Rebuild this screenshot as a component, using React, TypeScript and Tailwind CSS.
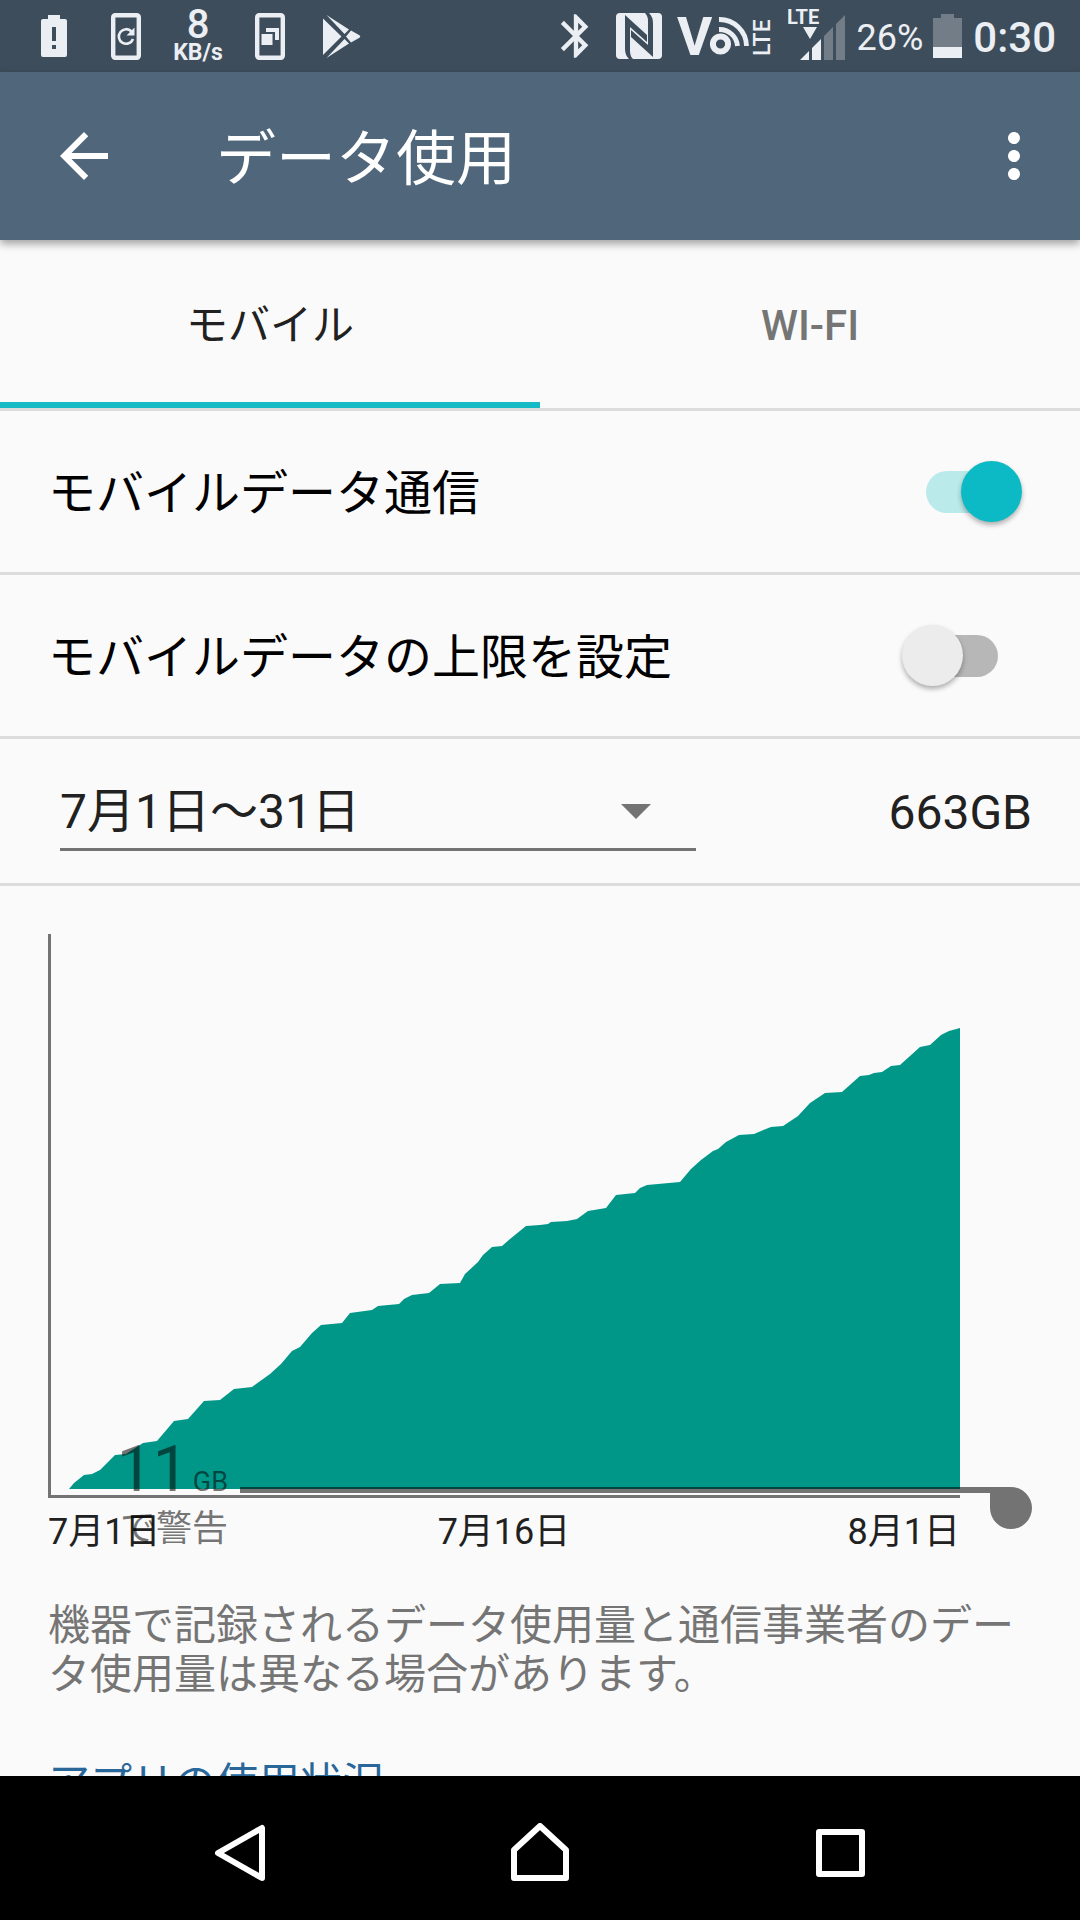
import { useState } from "react"
import { MdArrowBack, MdBluetooth, MdMoreVert } from "react-icons/md"

const usage: [number, number][] = [
    [21, 555], [26, 549], [36, 541], [44, 540], [52, 536], [67, 521], [78, 520], [95, 509], [109, 507],
    [126, 487], [140, 485], [156, 467], [172, 466], [186, 455], [204, 453], [222, 440], [233, 430],
    [244, 417], [252, 413], [264, 399], [273, 391], [294, 389], [302, 379], [324, 376], [330, 372],
    [351, 370], [356, 365], [364, 361], [381, 359], [392, 350], [412, 349], [417, 340], [430, 328],
    [435, 321], [444, 313], [454, 312], [462, 305], [478, 292], [492, 291], [500, 290], [503, 288],
    [519, 287], [529, 285], [540, 277], [558, 274], [568, 261], [587, 259], [592, 254], [599, 251],
    [632, 248], [643, 235], [653, 226], [665, 217], [670, 215], [678, 208], [691, 201], [706, 200],
    [713, 197], [723, 193], [735, 192], [750, 182], [762, 169], [777, 159], [794, 158], [812, 142],
    [821, 141], [826, 139], [834, 138], [843, 132], [852, 131], [872, 113], [882, 111], [893, 101],
    [901, 97], [912, 94],
]

const area = `M${usage.map(([x, y]) => `${x} ${y}`).join("L")}V555H21Z`

function StatusBar() {
    return (
        <div className="flex h-[72px] shrink-0 items-center justify-between bg-[#3e4d5b] pl-[18px] pr-6 text-[#ebeff3]">
            <div className="flex h-full items-center">
                <div className="flex w-[72px] justify-center">
                    <svg width="26" height="42" viewBox="0 0 26 42" fill="currentColor">
                        <path fillRule="evenodd" d="M7 0h12v4h5a2 2 0 0 1 2 2v34a2 2 0 0 1-2 2H2a2 2 0 0 1-2-2V6a2 2 0 0 1 2-2h5zM11 12v14h4V12zM11 30v4h4v-4z" />
                    </svg>
                </div>
                <div className="flex w-[72px] justify-center">
                    <svg width="30" height="47" viewBox="0 0 30 47" fill="none" stroke="currentColor">
                        <rect x="2.2" y="2.2" width="25.6" height="42.6" rx="2" strokeWidth="4.4" />
                        <path d="M20.5 18.5A7.3 7.3 0 1 0 22 26" strokeWidth="2.6" />
                        <path d="M23.5 14.5v8h-8z" fill="currentColor" stroke="none" />
                    </svg>
                </div>
                <div className="flex w-[72px] flex-col items-center pt-1">
                    <span className="text-[40px] leading-[30px] font-medium">8</span>
                    <span className="text-[23px] leading-[26px] font-bold">KB/s</span>
                </div>
                <div className="flex w-[72px] justify-center">
                    <svg width="30" height="47" viewBox="0 0 30 47">
                        <rect x="2.2" y="2.2" width="25.6" height="42.6" rx="2" fill="none" stroke="currentColor" strokeWidth="4.4" />
                        <path d="M11 15h13v12h-4v-8h-9zM6.500 21h11v11h-11z" fill="currentColor" />
                    </svg>
                </div>
                <div className="flex w-[72px] justify-center">
                    <svg width="38" height="43" viewBox="0 0 38 43" fill="currentColor">
                        <path d="M0 3.500 18.500 21.500 0 40zM3.500 0 26 14.500 21.500 19zM3.500 43 26 28.500 21.500 24zM28 15.500l8 4.500q2.500 1.500 0 3l-8 4.500-5-6z" />
                    </svg>
                </div>
            </div>
            <div className="flex h-full items-center gap-[10px]">
                <MdBluetooth size={52} />
                <svg width="54" height="46" viewBox="-4 0 54 46">
                    <rect width="46" height="46" rx="4" fill="currentColor" />
                    <g fill="#3e4d5b">
                        <path d="M9 2 31 22v7L14 14v24q0 5 3 8h-4q-4-4-4-10z" />
                        <path d="M37 44 15 24v-7l17 15V8q0-5-3-8h4q4 4 4 10z" />
                    </g>
                </svg>
                <svg width="102" height="60" viewBox="675 6 102 60" fill="currentColor">
                    <text x="676" y="55" fontSize="54" fontWeight="700">V</text>
                    <g fill="none" stroke="currentColor">
                        <circle cx="719.5" cy="44" r="7.600" strokeWidth="6" />
                        <path d="M718 19.500A27 27 0 0 1 745.500 46M718 29.500A18 18 0 0 1 736.500 46" strokeWidth="4.800" />
                    </g>
                    <text transform="translate(769 56) rotate(-90)" fontSize="23" fontWeight="500">LTE</text>
                </svg>
                <svg width="58" height="60" viewBox="788 6 58 60" fill="currentColor">
                    <text x="787" y="24" fontSize="20" fontWeight="700">LTE</text>
                    <path d="M803 27h14l-7 12zM800 60l9-9v9zM812 48l9-9v21h-9z" />
                    <path d="M824 36l9-9v33h-9zM836 24l9-9v45h-9z" opacity=".3" />
                </svg>
                <span className="pt-1 text-[36px] leading-none">26%</span>
                <svg width="30" height="44" viewBox="0 0 30 44" fill="currentColor">
                    <path d="M8 0h13v4h8v29H0V4h8z" opacity=".3" />
                    <path d="M0 33h29v11H0z" />
                </svg>
                <span className="pt-1 text-[42px] leading-none font-medium">0:30</span>
            </div>
        </div>
    )
}

type SwitchProps = {
    label: string
    checked: boolean
    onChange: (checked: boolean) => void
}

function Switch({ label, checked, onChange }: SwitchProps) {
    return (
        <label className={`flex h-[164px] items-center justify-between border-b-[3px] border-[#dcdcdc] pl-12 text-5xl text-black ${checked ? "pr-[58px]" : "pr-[82px]"}`}>
            <span className="pt-1">{label}</span>
            <span className="grid h-[62px] w-24 items-center">
                <input
                    type="checkbox"
                    role="switch"
                    checked={checked}
                    onChange={(e) => onChange(e.target.checked)}
                    className="peer col-start-1 row-start-1 h-[42px] w-[84px] appearance-none justify-self-end rounded-full bg-[#b7b7b7] checked:justify-self-start checked:bg-[#baeaea]"
                />
                <span className="pointer-events-none col-start-1 row-start-1 size-[61px] justify-self-start rounded-full bg-[#ececec] shadow-[0_3px_5px_rgba(0,0,0,0.3)] peer-checked:justify-self-end peer-checked:bg-[#0bbac4]" />
            </span>
        </label>
    )
}

function UsageChart() {
    return (
        <section className="px-12 pt-12">
            <div className="relative">
                <svg viewBox="0 0 984 564" className="block w-full overflow-visible">
                    <path d={area} fill="#009688" />
                    <path d="M0 0h3v561h909v3H0z" fill="#737373" />
                    {/* warning threshold and its drag handle */}
                    <path d="M192 553h771a21 21 0 1 1-21 21v-15H192z" fill="#000" fillOpacity=".54" />
                </svg>
                <div className="absolute top-[504px] left-[72px] flex w-[108px] flex-col items-end text-black/54">
                    <p className="flex items-baseline gap-1 leading-[64px]">
                        <span className="text-[64px]">11</span>
                        <span className="text-[27px]">GB</span>
                    </p>
                    <p className="text-4xl leading-[30px]">で警告</p>
                </div>
            </div>
            <div className="mr-[72px] flex justify-between pt-[10px] text-4xl leading-[48px]">
                <span>7月1日</span>
                <span>7月16日</span>
                <span>8月1日</span>
            </div>
        </section>
    )
}

export default function App() {
    const [mobileData, setMobileData] = useState(true)
    const [limit, setLimit] = useState(false)

    return (
        <div lang="ja" className="flex h-screen flex-col bg-[#fafafa] font-[Roboto,'Noto_Sans_CJK_JP',sans-serif] text-[#212121]">
            <StatusBar />

            <header className="z-10 flex h-[168px] shrink-0 items-center bg-[#50667a] px-[30px] text-white shadow-[0_4px_8px_rgba(0,0,0,0.35)]">
                <button aria-label="戻る" className="mx-[18px]">
                    <MdArrowBack size={72} />
                </button>
                <h1 className="ml-[78px] flex-1 pt-2 text-6xl font-normal">データ使用</h1>
                <button aria-label="その他">
                    <MdMoreVert size={72} />
                </button>
            </header>

            <main className="min-h-0 flex-1 overflow-hidden">
                <div role="tablist" className="grid h-[171px] grid-cols-2 border-b-[3px] border-[#dcdcdc] text-[42px]">
                    <button role="tab" aria-selected="true" className="border-b-[6px] border-[#16bac5] pt-2">モバイル</button>
                    <button role="tab" aria-selected="false" className="border-b-[6px] border-transparent pt-2 font-medium text-[#757575]">WI-FI</button>
                </div>

                <Switch label="モバイルデータ通信" checked={mobileData} onChange={setMobileData} />
                <Switch label="モバイルデータの上限を設定" checked={limit} onChange={setLimit} />

                <div className="flex h-[147px] items-center justify-between border-b-[3px] border-[#dcdcdc] pr-12 pl-[60px] text-5xl">
                    <div className="grid w-[636px] items-center border-b-[3px] border-[#737373]">
                        <select aria-label="期間" className="col-start-1 row-start-1 h-[76px] w-full appearance-none bg-transparent pt-1">
                            <option>7月1日～31日</option>
                        </select>
                        <svg width="30" height="15" viewBox="0 0 30 15" className="pointer-events-none col-start-1 row-start-1 mt-1 mr-[45px] justify-self-end">
                            <path d="M0 0h30L15 15z" fill="#737373" />
                        </svg>
                    </div>
                    <span className="pt-1">663GB</span>
                </div>

                <UsageChart />

                <p className="px-12 pt-[45px] text-[42px] leading-[49px] text-[#757575]">
                    機器で記録されるデータ使用量と通信事業者のデータ使用量は異なる場合があります。
                </p>
                <h2 className="px-12 pt-[60px] text-[42px] leading-[49px] font-normal text-[#29669a]">アプリの使用状況</h2>
            </main>

            <nav className="grid h-36 shrink-0 grid-cols-3 bg-black px-[90px] pt-[10px] text-white">
                <button aria-label="戻る" className="flex items-center justify-center">
                    <svg width="60" height="60" viewBox="0 0 60 60" fill="none" stroke="currentColor" strokeWidth="6" strokeLinejoin="round">
                        <path d="M52 5v50L8 30z" />
                    </svg>
                </button>
                <button aria-label="ホーム" className="flex items-center justify-center">
                    <svg width="60" height="60" viewBox="0 0 60 60" fill="none" stroke="currentColor" strokeWidth="6" strokeLinejoin="round">
                        <path d="M30 3 56 27v28H4V27z" />
                    </svg>
                </button>
                <button aria-label="最近" className="flex items-center justify-center">
                    <svg width="60" height="60" viewBox="0 0 60 60" fill="none" stroke="currentColor" strokeWidth="6" strokeLinejoin="round">
                        <path d="M9 9h43v42H9z" />
                    </svg>
                </button>
            </nav>
        </div>
    )
}
